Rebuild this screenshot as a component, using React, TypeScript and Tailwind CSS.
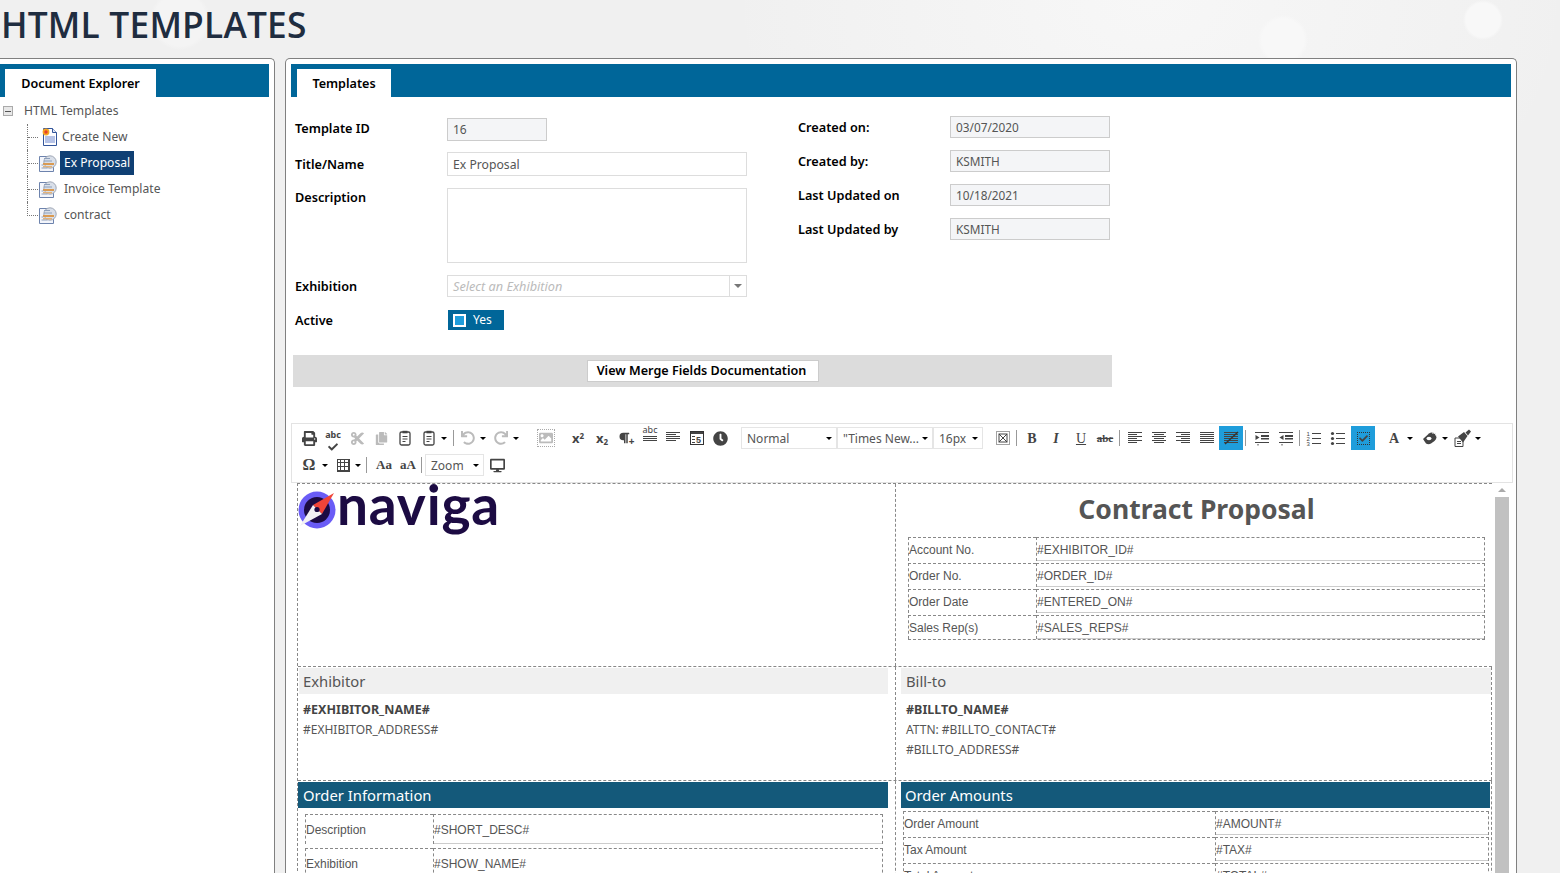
import type { ReactNode } from 'react';
import { FaPrint, FaCut, FaCopy, FaUndo, FaRedo, FaImage, FaParagraph, FaClock, FaDesktop, FaCheck } from 'react-icons/fa';

const sans = "font-['Noto_Sans','Open_Sans',sans-serif]";
const arial = "font-['Liberation_Sans',Arial,sans-serif]";
const serif = "font-['Liberation_Serif','Times_New_Roman',serif]";

function Caret({ className = '' }: { className?: string }) {
  return <span className={`w-0 h-0 border-x-[3px] border-x-transparent border-t-[3px] border-t-black ${className}`} />;
}

function Sep({ className = '' }: { className?: string }) {
  return <span className={`w-px h-[16px] bg-[#999] ${className}`} />;
}

function Btn({ children, active, className = '' }: { children?: ReactNode; active?: boolean; className?: string }) {
  return (
    <span className={`w-6 h-6 shrink-0 flex items-center justify-center text-[#444] ${active ? 'bg-[#1f9ddb]' : ''} ${className}`}>
      {children}
    </span>
  );
}

// horizontal line sets, used for the align buttons
function Lines({ rows, slash }: { rows: [number, number][]; slash?: boolean }) {
  return (
    <svg width="16" height="16" viewBox="0 0 16 16">
      {rows.map(([x, w], i) => (
        <rect key={i} x={x} y={2 + i * 2} width={w} height="1" fill="#444" />
      ))}
      {slash && <path d="M2 14L15 2" stroke="#333" strokeWidth="1.5" />}
    </svg>
  );
}

const al = (a: [number, number]): [number, number][] => [[1, 14], a, [1, 14], a, [1, 14], a];

function IndentIcon({ out }: { out?: boolean }) {
  return (
    <svg width="16" height="16" viewBox="0 0 16 16" fill="#444">
      <rect x="1" y="2" width="14" height="1" />
      <rect x="7" y="5" width="8" height="2" />
      <rect x="7" y="8" width="8" height="1.5" />
      <rect x="1" y="12" width="14" height="1" />
      <path d={out ? 'M5.5 5v5L1.5 7.5z' : 'M1.5 5v5l4-2.5z'} />
      <path d="M4 14v1.5" stroke="#444" />
    </svg>
  );
}

function OlIcon() {
  return (
    <svg width="16" height="16" viewBox="0 0 16 16" fill="#444">
      <text x="0.5" y="5.5" fontSize="6" fontFamily="Liberation Sans">1</text>
      <text x="0.5" y="10.5" fontSize="6" fontFamily="Liberation Sans">2</text>
      <text x="0.5" y="15.5" fontSize="6" fontFamily="Liberation Sans">3</text>
      <rect x="6" y="3" width="9" height="1" />
      <rect x="6" y="8" width="9" height="1" />
      <rect x="6" y="13" width="9" height="1" />
    </svg>
  );
}

function UlIcon() {
  return (
    <svg width="16" height="16" viewBox="0 0 16 16" fill="#444">
      <circle cx="2.5" cy="3.5" r="1.6" />
      <circle cx="2.5" cy="8.5" r="1.6" />
      <circle cx="2.5" cy="13.5" r="1.6" />
      <rect x="6" y="3" width="9" height="1" />
      <rect x="6" y="8" width="9" height="1" />
      <rect x="6" y="13" width="9" height="1" />
    </svg>
  );
}

function EraserIcon() {
  return (
    <svg width="16" height="14" viewBox="0 0 16 14">
      <path d="M1 8L7 2.5c2-1.5 5-1 6.5 0.5 1.5 2 1.5 5-1 7L9 12.5c-1.5 1-3.500 1-5 0z" fill="#444" />
      <ellipse cx="7" cy="7.500" rx="2.500" ry="1.800" fill="#fff" />
      <path d="M10 2c2-0.500 4 1 4.500 3.500" stroke="#fff" strokeWidth="1" fill="none" />
    </svg>
  );
}

function BrushIcon() {
  return (
    <svg width="18" height="18" viewBox="0 0 18 18" fill="#444">
      <path d="M1 9h8v8.500H1z" fill="#fff" stroke="#444" />
      <path d="M3 12.500h4M3 14.500h4" stroke="#444" />
      <path d="M4 7.500L10 3l3.500 4-4.500 6.500z" />
      <path d="M11.500 3.500L15 0.500l2 2-3 4z" />
    </svg>
  );
}

function PageIcon() {
  return (
    <svg width="16" height="16" viewBox="0 0 16 16" fill="#444">
      <rect x="1.500" y="1.500" width="13" height="13" fill="none" stroke="#333" />
      <rect x="2" y="2" width="12" height="2" />
      <rect x="3" y="6" width="3" height="1" />
      <rect x="3" y="9" width="3" height="1" />
      <rect x="3" y="12" width="3" height="1" />
      <text x="7" y="13" fontSize="9" fontWeight="bold" fontFamily="Liberation Sans">5</text>
    </svg>
  );
}

function MaximizeIcon() {
  return (
    <svg width="14" height="14" viewBox="0 0 14 14" fill="none" stroke="#444">
      <rect x="0.500" y="0.500" width="13" height="13" strokeDasharray="1 1" />
      <rect x="3" y="3" width="8" height="8" />
      <path d="M3 3l8 8M11 3l-8 8" />
    </svg>
  );
}

function DocIcon({ create }: { create?: boolean }) {
  if (create) {
    return (
      <svg width="17" height="20" viewBox="0 0 17 20" className="shrink-0">
        <path d="M2.500 1.500h9l4 4v13h-13z" fill="#fdfdff" stroke="#33559a" />
        <path d="M11.500 1.500v4h4" fill="#dfe6f5" stroke="#33559a" />
        <rect x="4" y="9" width="10" height="7" fill="#b5c2e6" />
        <circle cx="5" cy="5" r="3.400" fill="#f5a623" />
        <circle cx="5" cy="5" r="1.700" fill="#e8402a" />
      </svg>
    );
  }
  return (
    <svg width="20" height="20" viewBox="0 0 20 20" className="shrink-0">
      <path d="M1.500 3.500h11l3 3v12h-14z" fill="#f3f5fb" stroke="#6d83ad" />
      <circle cx="12" cy="9" r="6.200" fill="#d9dfe9" stroke="#a0a8b6" />
      <path d="M6 8h8M6 5.500h6" stroke="#8fa0ba" />
      <rect x="5" y="10" width="11" height="2" fill="#d99a52" />
      <rect x="5" y="13" width="9" height="1.500" fill="#e3b27a" />
      <path d="M3.500 12h2M3.500 15h6" stroke="#8fa0ba" />
    </svg>
  );
}

function Tabbar({ label, tabClass }: { label: string; tabClass: string }) {
  return (
    <div className="h-[33px] bg-[#006699] flex items-end">
      <div className={`h-[28px] pt-[2px] bg-white flex items-center justify-center text-[12.6px] font-semibold text-black ${tabClass}`}>{label}</div>
    </div>
  );
}

const tree = [
  { label: 'Create New', create: true },
  { label: 'Ex Proposal', selected: true },
  { label: 'Invoice Template' },
  { label: 'contract' },
];

function Explorer() {
  return (
    <aside className="w-[275px] shrink-0 bg-white border-t border-r border-[#808080] rounded-tr-[5px] pt-[5px] pr-[5px]">
      <Tabbar label="Document Explorer" tabClass="ml-[5px] w-[151px]" />
      <div className="mt-px h-[26px] flex items-center text-[12.1px] text-[#555]">
        <span className="ml-[3px] w-[10px] h-[10px] border border-[#aaa] bg-[#e8e8e8] flex items-center justify-center">
          <span className="w-[6px] h-px bg-[#555]" />
        </span>
        <span className="ml-[11px]">HTML Templates</span>
      </div>
      <ul className="ml-[27px]">
        {tree.map((item, i) => {
          const last = i === tree.length - 1;
          return (
            <li key={item.label} className={`h-[26px] flex items-center border-dotted border-[#777] ${last ? '' : 'border-l'}`}>
              <span className={`self-start h-[14px] border-b border-dotted border-[#777] ${last ? 'border-l w-[11px]' : 'w-[10px]'}`} />
              <span className={item.create ? 'ml-[3px]' : ''}><DocIcon create={item.create} /></span>
              <span
                className={`text-[12.1px] h-[24px] pt-px flex items-center ${
                  item.selected ? 'ml-[2px] px-[4px] bg-[#0f3f73] text-white' : item.create ? 'ml-[4px] text-[#555]' : 'ml-[6px] text-[#555]'
                }`}
              >
                {item.label}
              </span>
            </li>
          );
        })}
      </ul>
    </aside>
  );
}

function Label({ children, className = '' }: { children: ReactNode; className?: string }) {
  return <div className={`text-[12.7px] font-semibold text-black ${className}`}>{children}</div>;
}

function ReadOnly({ label, value }: { label: string; value: string }) {
  return (
    <div className="h-[22px] mb-[12px] flex items-center">
      <Label className="w-[152px] pt-px">{label}</Label>
      <div className="w-[160px] h-[22px] border border-[#ccc] bg-[#f4f5f7] px-[5px] pt-[2px] flex items-center text-[11.8px] text-[#555]">{value}</div>
    </div>
  );
}

function TemplateForm() {
  return (
    <div className="flex pl-[4px] pt-[20px]">
      <div className="w-[503px] shrink-0">
        <div className="h-[24px] flex items-center">
          <Label className="w-[152px]">Template ID</Label>
          <div className="w-[100px] h-[23px] border border-[#ccc] bg-[#f4f5f7] px-[5px] pt-px flex items-center text-[12px] text-[#555]">16</div>
        </div>
        <div className="mt-[11px] h-[24px] flex items-center">
          <Label className="w-[152px] pt-px">Title/Name</Label>
          <div className="w-[300px] h-[24px] border border-[#ddd] px-[5px] pt-[2px] flex items-center text-[12.2px] text-[#555]">Ex Proposal</div>
        </div>
        <div className="mt-[12px] flex">
          <Label className="w-[152px]">Description</Label>
          <div className="w-[300px] h-[75px] border border-[#ddd]" />
        </div>
        <div className="mt-[12px] h-[22px] flex items-center">
          <Label className="w-[152px] pt-px">Exhibition</Label>
          <div className="w-[300px] h-[22px] border border-[#ddd] flex items-center">
            <span className="flex-1 px-[5px] pt-[2px] text-[12.7px] italic text-[#bbb]">Select an Exhibition</span>
            <span className="w-[17px] h-full border-l border-[#ddd] flex items-center justify-center">
              <span className="w-0 h-0 border-x-[4px] border-x-transparent border-t-[4px] border-t-[#777]" />
            </span>
          </div>
        </div>
        <div className="mt-[13px] h-[20px] flex items-center">
          <Label className="w-[153px] pt-px">Active</Label>
          <div className="w-[56px] h-[20px] bg-[#006699] flex items-center pl-[5px] text-[12px] text-white">
            <span className="w-[13px] h-[13px] bg-white flex items-center justify-center">
              <span className="w-[9px] h-[9px] bg-[#1f9ddb]" />
            </span>
            <span className="ml-[7px]">Yes</span>
          </div>
        </div>
      </div>
      <div className="-mt-[1px]">
        <ReadOnly label="Created on:" value="03/07/2020" />
        <ReadOnly label="Created by:" value="KSMITH" />
        <ReadOnly label="Last Updated on" value="10/18/2021" />
        <ReadOnly label="Last Updated by" value="KSMITH" />
      </div>
    </div>
  );
}

function Select({ label, className }: { label: string; className: string }) {
  return (
    <span className={`h-[22px] border border-[#e5e5e5] flex items-center justify-between pl-[5px] pr-[4px] pt-px text-[12px] text-[#555] whitespace-nowrap ${className}`}>
      <span>{label}</span>
      <Caret />
    </span>
  );
}

function Toolbar() {
  return (
    <div className="w-[1222px] h-[60px] border-t border-x border-b border-[#e3e3e3] pl-[5px] pt-[2px]">
      <div className="h-[24px] flex items-center">
        <Btn><FaPrint size={15} /></Btn>
        <Btn>
          <span className="relative flex items-center justify-center">
            <span className={`${sans} text-[9px] leading-none font-bold -mt-[7px]`}>abc</span>
            <FaCheck size={10} className="absolute top-[5px] left-[3px]" />
          </span>
        </Btn>
        <Btn className="text-[#bbb]"><FaCut size={15} /></Btn>
        <Btn className="text-[#bbb]"><FaCopy size={13} /></Btn>
        <Btn><Clip /></Btn>
        <Btn><Clip /></Btn>
        <Caret />
        <Sep className="ml-[6px]" />
        <Btn className="ml-[2px] text-[#bbb]"><FaUndo size={14} /></Btn>
        <Caret className="border-t-[#aaa]" />
        <Btn className="ml-[3px] text-[#bbb]"><FaRedo size={14} /></Btn>
        <Caret className="border-t-[#aaa]" />
        <Btn className="ml-[15px] text-[#bbb]">
          <span className="border border-dotted border-[#aaa] p-[1px] flex"><FaImage size={14} /></span>
        </Btn>
        <Btn className="ml-[8px]"><span className={`${sans} font-bold text-[13px] leading-none`}>x<sup className="text-[8px]">2</sup></span></Btn>
        <Btn><span className={`${sans} font-bold text-[13px] leading-none`}>x<sub className="text-[8px]">2</sub></span></Btn>
        <Btn><FaParagraph size={12} /><span className="text-[10px] font-bold leading-none -ml-[1px] mt-[5px]">+</span></Btn>
        <Btn>
          <span className="flex flex-col items-center">
            <span className={`${sans} text-[9px] leading-[8px]`}>abc</span>
            <Lines rows={[[1, 14], [1, 14], [1, 14]]} />
          </span>
        </Btn>
        <Btn className="-ml-px"><Lines rows={[[1, 14], [1, 10], [1, 14], [1, 14], [1, 10]]} /></Btn>
        <Btn><PageIcon /></Btn>
        <Btn className="-ml-px"><FaClock size={15} /></Btn>
        <Select label="Normal" className="ml-[9px] w-[96px]" />
        <Select label={'"Times New...'} className="w-[96px]" />
        <Select label="16px" className="w-[50px]" />
        <Btn className="ml-[8px]"><MaximizeIcon /></Btn>
        <Sep className="ml-[1px]" />
        <Btn className="ml-[3px]"><span className={`${serif} font-bold text-[14px]`}>B</span></Btn>
        <Btn><span className={`${serif} font-bold italic text-[14px]`}>I</span></Btn>
        <Btn className="ml-[1px]"><span className={`${serif} underline text-[14px]`}>U</span></Btn>
        <Btn><span className={`${serif} font-bold line-through text-[11px]`}>abc</span></Btn>
        <Sep className="ml-[2px]" />
        <Btn className="ml-[3px]"><Lines rows={al([1, 9])} /></Btn>
        <Btn><Lines rows={al([3, 10])} /></Btn>
        <Btn><Lines rows={al([6, 9])} /></Btn>
        <Btn><Lines rows={al([1, 14])} /></Btn>
        <Btn active><Lines rows={al([1, 14])} slash /></Btn>
        <Sep className="ml-[2px]" />
        <Btn className="ml-[4px]"><IndentIcon /></Btn>
        <Btn><IndentIcon out /></Btn>
        <Sep className="ml-[1px]" />
        <Btn className="ml-[2px]"><OlIcon /></Btn>
        <Btn><UlIcon /></Btn>
        <Btn active className="ml-[1px]">
          <span className="w-[13px] h-[13px] border border-dotted border-[#333] flex items-center justify-center"><FaCheck size={9} /></span>
        </Btn>
        <Btn className="ml-[7px]"><span className={`${serif} font-bold text-[14px]`}>A</span></Btn>
        <Caret className="ml-[1px]" />
        <Btn className="ml-[5px]"><EraserIcon /></Btn>
        <Caret />
        <Btn className="ml-[3px]"><BrushIcon /></Btn>
        <Caret />
      </div>
      <div className="h-[24px] mt-[3px] flex items-center">
        <Btn><span className={`${serif} font-bold text-[16px]`}>Ω</span></Btn>
        <Caret className="ml-[1px]" />
        <Btn className="ml-[3px]">
          <span className="w-[13px] h-[13px] border border-[#444] grid grid-cols-3 grid-rows-3">
            {Array.from({ length: 9 }).map((_, i) => <span key={i} className="border-r border-b border-[#444]" />)}
          </span>
        </Btn>
        <Caret />
        <Sep className="ml-[5px]" />
        <Btn className="ml-[5px]"><span className={`${serif} font-bold text-[13px]`}>Aa</span></Btn>
        <Btn><span className={`${serif} font-bold text-[13px]`}>aA</span></Btn>
        <Sep className="ml-[1px]" />
        <Select label="Zoom" className="ml-[3px] w-[59px]" />
        <Btn className="ml-px"><FaDesktop size={15} /></Btn>
      </div>
    </div>
  );
}

function Clip() {
  return (
    <svg width="14" height="16" viewBox="0 0 14 16" fill="none" stroke="#444">
      <rect x="2" y="2" width="10" height="13" rx="1.500" strokeWidth="1.300" />
      <rect x="4.500" y="0.800" width="5" height="2.500" fill="#444" stroke="none" />
      <path d="M4.500 6.500h5M4.500 9h5M4.500 11.500h3" />
    </svg>
  );
}

function Logo() {
  return (
    <div className="flex items-start h-[58px]">
      <svg width="38" height="40" viewBox="0 0 38 40" className="shrink-0 mt-[7px]">
        <circle cx="19" cy="19" r="18.500" fill="#6a5cf6" />
        <circle cx="19" cy="19" r="13" fill="#1c0b43" />
        <path d="M36 2L15 14L24 23Z" fill="#f04438" />
        <path d="M2 35L15 14L24 23Z" fill="#f2f0f4" />
        <circle cx="19" cy="18.500" r="2.600" fill="#1c0b43" />
      </svg>
      <span className="ml-[1px] mt-px text-[55px] leading-[38px] font-['Lato',sans-serif] font-bold tracking-[0.8px] text-[#1c0b43]">naviga</span>
    </div>
  );
}

function Row({ label, value, labelW, h, className = '' }: { label: string; value: string; labelW: string; h: string; className?: string }) {
  return (
    <div className={`flex ${h} ${className}`}>
      <div className={`${labelW} shrink-0 border-l border-t border-dashed border-[#888] flex items-center`}>{label}</div>
      <div className="flex-1 border-l border-t border-r border-dashed border-[#888] flex items-center relative">
        {value}
        <span className="absolute left-0 right-0 bottom-0 h-px bg-[#ccc]" />
      </div>
    </div>
  );
}

function Editor() {
  return (
    <div className="relative h-[391px] bg-white text-[#555]">
      <div className="ml-[6px] w-[1195px] border-t border-l border-dashed border-[#888]">
        <div className="flex h-[183px] border-b border-dashed border-[#888]">
          <div className="w-[598px] shrink-0 border-r border-dashed border-[#888]"><Logo /></div>
          <div className="flex-1 border-r border-dashed border-[#888] pl-[12px] pr-[14px]">
            <h2 className={`${sans} text-[26.5px] leading-[36px] font-bold text-center text-[#555] mt-[7px]`}>Contract Proposal</h2>
            <div className={`${arial} text-[12px] text-[#555] mt-[10px] w-[577px] border-b border-dashed border-[#888]`}>
              <Row label="Account No." value="#EXHIBITOR_ID#" labelW="w-[128px]" h="h-[24px]" />
              <Row label="Order No." value="#ORDER_ID#" labelW="w-[128px]" h="h-[24px]" className="mt-[2px]" />
              <Row label="Order Date" value="#ENTERED_ON#" labelW="w-[128px]" h="h-[24px]" className="mt-[2px]" />
              <Row label="Sales Rep(s)" value="#SALES_REPS#" labelW="w-[128px]" h="h-[24px]" className="mt-[2px]" />
            </div>
          </div>
        </div>
        <div className="flex h-[114px] border-b border-dashed border-[#888]">
          <div className={`w-[598px] shrink-0 pt-px border-r border-dashed border-[#888] ${sans}`}>
            <div className="ml-[1px] w-[589px] h-[26px] bg-[#f0f0f0] px-[4px] flex items-center text-[14.8px] text-[#555]">Exhibitor</div>
            <div className="pl-[5px] text-[12.5px] font-bold leading-[20px] mt-[6px] text-[#444]">#EXHIBITOR_NAME#</div>
            <div className="pl-[5px] text-[12px] leading-[20px]">#EXHIBITOR_ADDRESS#</div>
          </div>
          <div className={`flex-1 pt-px border-r border-dashed border-[#888] ${sans}`}>
            <div className="ml-[5px] w-[590px] h-[26px] bg-[#f0f0f0] px-[5px] flex items-center text-[14.8px] text-[#555]">Bill-to</div>
            <div className="pl-[10px] text-[12.5px] font-bold leading-[20px] mt-[6px] text-[#444]">#BILLTO_NAME#</div>
            <div className="pl-[10px] text-[12px] leading-[20px]">ATTN: #BILLTO_CONTACT#</div>
            <div className="pl-[10px] text-[12px] leading-[20px]">#BILLTO_ADDRESS#</div>
          </div>
        </div>
        <div className="flex h-[100px]">
          <div className="w-[598px] shrink-0 pt-px border-r border-dashed border-[#888]">
            <div className={`${sans} w-[590px] h-[26px] bg-[#14597a] px-[5px] flex items-center text-[14.8px] text-white`}>Order Information</div>
            <div className={`${arial} text-[12px] ml-[7px] w-[578px] mt-[6px]`}>
              <Row label="Description" value="#SHORT_DESC#" labelW="w-[128px]" h="h-[30px]" />
              <Row label="Exhibition" value="#SHOW_NAME#" labelW="w-[128px]" h="h-[30px]" className="mt-[4px]" />
            </div>
          </div>
          <div className="flex-1 pt-px border-r border-dashed border-[#888]">
            <div className={`${sans} ml-[5px] w-[589px] h-[26px] bg-[#14597a] px-[4px] flex items-center text-[14.8px] text-white`}>Order Amounts</div>
            <div className={`${arial} text-[12px] ml-[7px] w-[586px] mt-[3px]`}>
              <Row label="Order Amount" value="#AMOUNT#" labelW="w-[312px]" h="h-[24px]" />
              <Row label="Tax Amount" value="#TAX#" labelW="w-[312px]" h="h-[24px]" className="mt-[2px]" />
              <Row label="Total Amount" value="#TOTAL#" labelW="w-[312px]" h="h-[24px]" className="mt-[2px]" />
            </div>
          </div>
        </div>
      </div>
      <div className="absolute top-0 bottom-0 left-[1204px] w-[14px] overflow-hidden bg-white">
        <div className="h-[14px] flex items-center justify-center">
          <span className="w-0 h-0 border-x-[4px] border-x-transparent border-b-[4px] border-b-[#aaa]" />
        </div>
        <div className="h-full bg-[#c1c1c1]" />
      </div>
    </div>
  );
}

export default function App() {
  return (
    <div className={`${sans} h-screen overflow-hidden bg-[#f0f0f0] bg-[radial-gradient(circle_at_1483px_20px,#f8f8f8_17px,transparent_20px),radial-gradient(circle_at_1283px_40px,#f8f8f8_21px,transparent_25px),radial-gradient(circle_at_180px_20px,#f4f4f4_26px,transparent_30px),radial-gradient(ellipse_at_1150px_0px,#f7f7f7_0px,transparent_420px)]`}>
      <h1 className="h-[58px] pl-[1px] text-[35.3px] leading-[48px] font-semibold tracking-[0.2px] text-[#1f2d40] [font-family:'Open_Sans',sans-serif]">HTML TEMPLATES</h1>
      <div className="flex gap-[10px]">
        <Explorer />
        <main className="w-[1232px] h-[815px] bg-white border-t border-x border-[#808080] rounded-t-[5px] pt-[5px] px-[5px]">
          <Tabbar label="Templates" tabClass="ml-[6px] w-[94px]" />
          <TemplateForm />
          <div className="mt-[25px] ml-[2px] w-[819px] h-[32px] bg-[#dcdcdc] flex items-center justify-center">
            <div className="w-[232px] h-[22px] bg-white border border-[#ccc] pt-px pr-[2px] flex items-center justify-center text-[12.6px] font-semibold text-black">View Merge Fields Documentation</div>
          </div>
          <div className="mt-[36px]"><Toolbar /></div>
          <Editor />
        </main>
      </div>
    </div>
  );
}
